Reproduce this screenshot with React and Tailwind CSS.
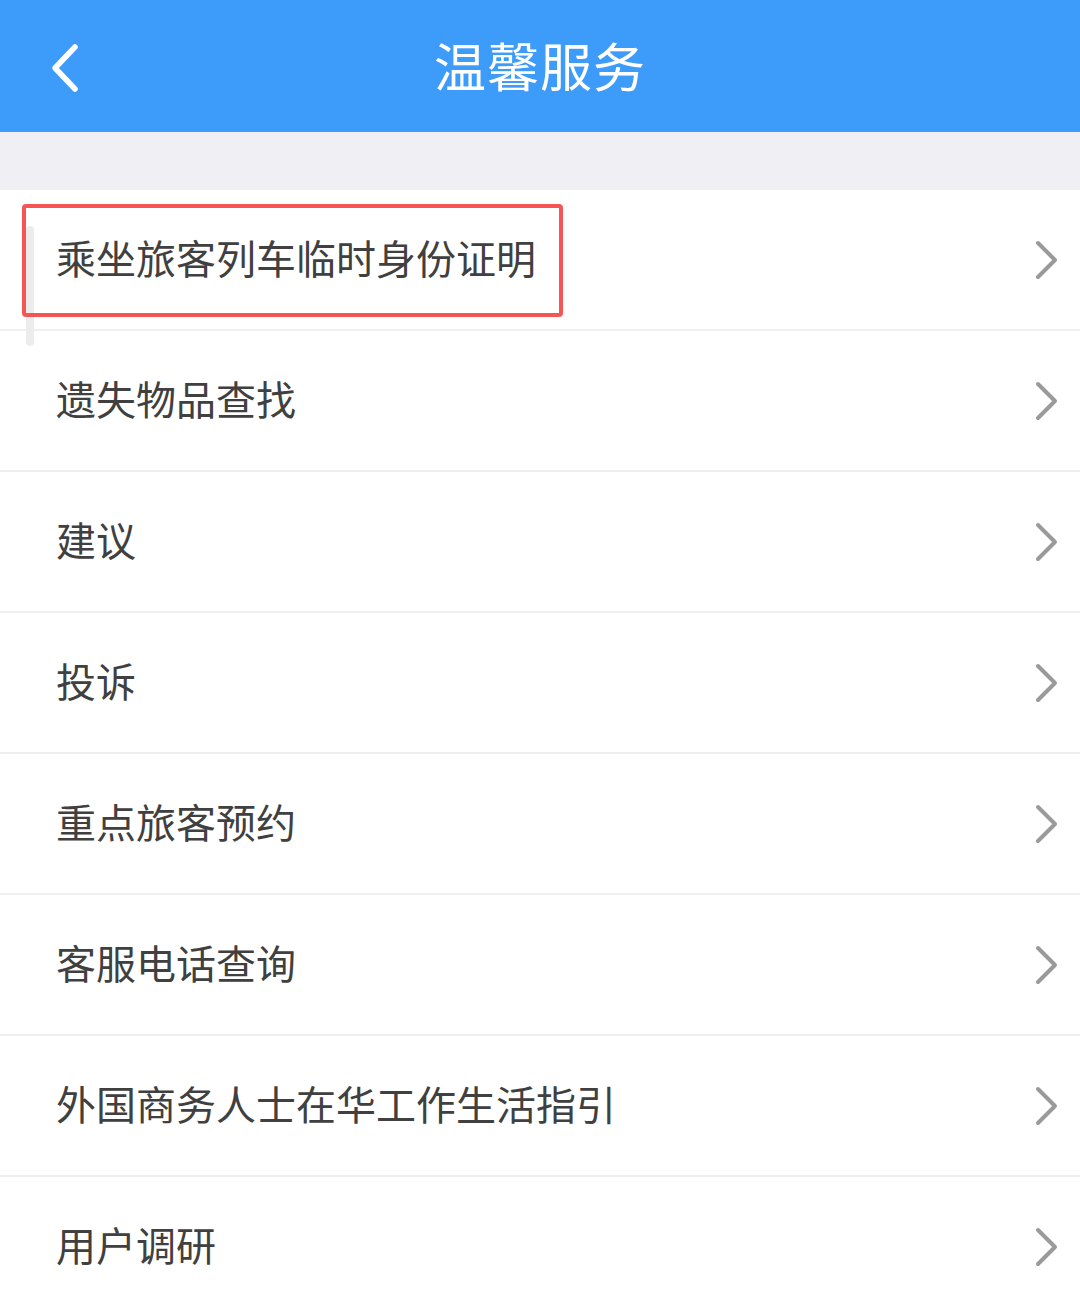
import React from "react";

const items = [
  "乘坐旅客列车临时身份证明",
  "遗失物品查找",
  "建议",
  "投诉",
  "重点旅客预约",
  "客服电话查询",
  "外国商务人士在华工作生活指引",
  "用户调研",
];

function Chevron() {
  return (
    <svg width="26" height="40" viewBox="0 0 26 40" className="shrink-0">
      <path d="M4 3 L21 20 L4 37" fill="none" stroke="#9a9a9a" strokeWidth="4" strokeLinecap="round" strokeLinejoin="round" />
    </svg>
  );
}

export default function App() {
  return (
    <div
      className="w-[1080px] h-[1308px] overflow-hidden bg-white relative"
      style={{ fontFamily: '"Noto Sans CJK SC", "Noto Sans", sans-serif' }}
    >
      <div className="h-[132px] bg-[#3d9bfa] flex items-center relative">
        <svg width="40" height="50" viewBox="0 0 40 50" className="absolute left-[45px] top-[43px]">
          <path d="M30 4 L10 25 L30 46" fill="none" stroke="#ffffff" strokeWidth="5.5" strokeLinecap="round" strokeLinejoin="round" />
        </svg>
        <div className="flex-1 text-center text-white text-[52px] leading-none tracking-[1px] -mt-[2px]">温馨服务</div>
      </div>
      <div className="h-[58px] bg-[#efeff4]" />
      <div className="flex flex-col">
        {items.map((t, i) => (
          <div key={i} className="h-[141px] border-b-2 border-[#efefef] flex items-center justify-between pl-[56px] pr-[20px] relative">
            <span className="text-[40px] text-[#404040] leading-none -mt-[6px]">{t}</span>
            <Chevron />
            {i === 0 && (
              <>
                <div className="absolute left-[26px] top-[36px] w-[8px] h-[120px] rounded-full bg-[#ececec]" />
                <div className="absolute left-[22px] top-[14px] w-[541px] h-[113px] border-[4px] border-[#f65555] rounded-[4px]" />
              </>
            )}
          </div>
        ))}
      </div>
    </div>
  );
}
